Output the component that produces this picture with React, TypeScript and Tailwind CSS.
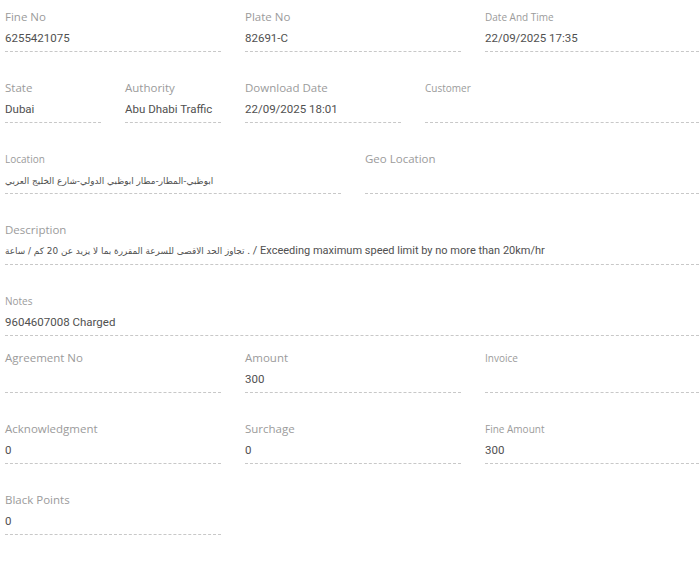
import type { ReactNode } from 'react';

type Field = {
    label: string;
    value?: ReactNode;
    width?: string;
    small?: boolean;
    tight?: boolean;
    dense?: boolean;
};

const ar = (text: string) => (
    <span className="text-[8.9px]" style={{ fontFamily: '"DejaVu Sans", sans-serif' }}>
        {text}
    </span>
);

const rows: Field[][] = [
    [
        { label: 'Fine No', value: '6255421075', width: 'w-[216px]' },
        { label: 'Plate No', value: '82691-C', width: 'w-[216px]' },
        { label: 'Date And Time', value: '22/09/2025 17:35', small: true },
    ],
    [
        { label: 'State', value: 'Dubai', width: 'w-[96px]' },
        { label: 'Authority', value: 'Abu Dhabi Traffic', width: 'w-[96px]' },
        { label: 'Download Date', value: '22/09/2025 18:01', width: 'w-[156px]' },
        { label: 'Customer', small: true },
    ],
    [
        { label: 'Location', value: ar('ابوظبي-المطار-مطار ابوظبي الدولي-شارع الخليج العربي'), width: 'w-[336px]', small: true },
        { label: 'Geo Location' },
    ],
    [
        {
            label: 'Description',
            dense: true,
            value: (
                <>
                    {ar('تجاوز الحد الاقصى للسرعة المقررة بما لا يزيد عن 20 كم / ساعة')} . / Exceeding maximum speed limit by no more than 20km/hr
                </>
            ),
        },
    ],
    [{ label: 'Notes', value: '9604607008 Charged', small: true, tight: true }],
    [
        { label: 'Agreement No', width: 'w-[216px]' },
        { label: 'Amount', value: '300', width: 'w-[216px]' },
        { label: 'Invoice', small: true },
    ],
    [
        { label: 'Acknowledgment', value: '0', width: 'w-[216px]' },
        { label: 'Surchage', value: '0', width: 'w-[216px]' },
        { label: 'Fine Amount', value: '300', small: true },
    ],
    [{ label: 'Black Points', value: '0', width: 'w-[216px]' }],
];

function FieldBox({ field }: { field: Field }) {
    return (
        <div className={`${field.width ?? 'flex-1 min-w-0'} shrink-0 pt-[10px]`}>
            <div
                className={`h-[14px] leading-[14px] text-[#9b9b9b] whitespace-nowrap ${
                    field.small ? 'text-[10px]' : 'text-[11.5px]'
                }`}
                style={{ fontFamily: '"Open Sans", "DejaVu Sans", sans-serif' }}
            >
                {field.label}
            </div>
            <div
                className={`mt-[6px] h-[17px] leading-[16px] text-[#505050] whitespace-nowrap pb-[4px] box-content border-b border-dashed border-[#c8c8c8] ${
                    field.dense ? 'text-[11px]' : 'text-[11.5px]'
                }`}
                style={{ fontFamily: 'Roboto, "DejaVu Sans", sans-serif' }}
            >
                {field.value ?? ''}
            </div>
        </div>
    );
}

export default function App() {
    return (
        <div className="w-[699px] h-[568px] overflow-hidden bg-white pl-[5px]">
            {rows.map((row, i) => (
                <div key={i} className={`flex gap-[24px] ${row[0].tight ? 'mb-[5px]' : 'mb-[19px]'}`}>
                    {row.map((f) => (
                        <FieldBox key={f.label} field={f} />
                    ))}
                </div>
            ))}
        </div>
    );
}
